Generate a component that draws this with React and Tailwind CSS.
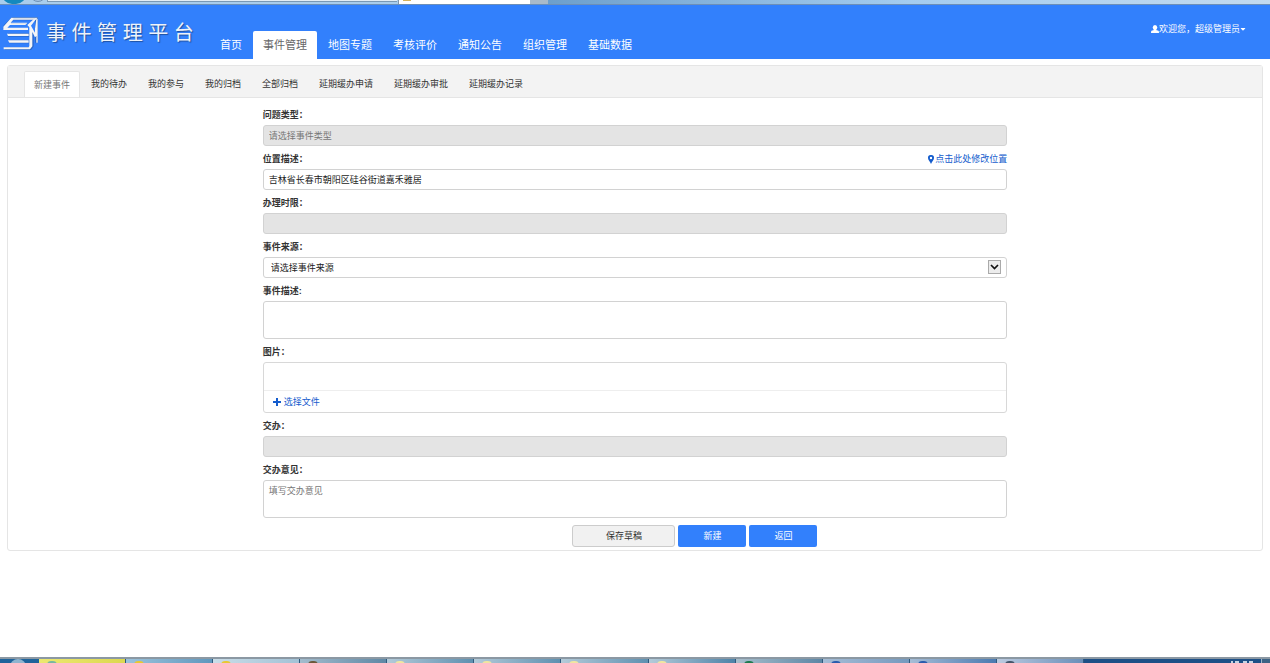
import React from "react";
import { FaCaretDown } from "react-icons/fa";

const navItems = ["首页", "事件管理", "地图专题", "考核评价", "通知公告", "组织管理", "基础数据"];

const tabs = [
  "新建事件",
  "我的待办",
  "我的参与",
  "我的归档",
  "全部归档",
  "延期缓办申请",
  "延期缓办审批",
  "延期缓办记录",
];

const inputClass =
  "block w-full h-[21px] px-[5px] border border-[#d2d2d2] rounded-[3px] bg-white text-[#222] placeholder:text-[#777] disabled:bg-[#e4e4e4] outline-none focus:border-[#3280fc]";

const areaClass =
  "block w-full h-[38px] px-[5px] py-1 border border-[#d2d2d2] rounded-[3px] resize-none placeholder:text-[#777] outline-none focus:border-[#3280fc]";

// 任务栏窗口
const tasks = [
  { bg: "bg-linear-to-r from-[#ece870] to-[#dcd850]", icon: "bg-[#78b8a0]" },
  { bg: "bg-linear-to-r from-[#9cc3dc] to-[#5f97bd]", icon: "bg-[#e8c832]" },
  { bg: "bg-linear-to-r from-[#c9dde8] to-[#a3c2d6]", icon: "bg-[#e8c832]" },
  { bg: "bg-linear-to-r from-[#a3bccd] to-[#5f88a5]", icon: "bg-[#6b5a3c]" },
  { bg: "bg-linear-to-r from-[#b4cbd9] to-[#5e90b0]", icon: "bg-[#f0e6a0]" },
  { bg: "bg-linear-to-r from-[#b4cbd9] to-[#5e90b0]", icon: "bg-[#f0e6a0]" },
  { bg: "bg-linear-to-r from-[#b4cbd9] to-[#5e90b0]", icon: "bg-[#f0e6a0]" },
  { bg: "bg-linear-to-r from-[#b4cbd9] to-[#4d83a8]", icon: "bg-[#f0e6a0]" },
  { bg: "bg-linear-to-r from-[#a9bfcc] to-[#5c86a5]", icon: "bg-[#1f7a50]" },
  { bg: "bg-linear-to-r from-[#a6bdd6] to-[#7599be]", icon: "bg-[#2a5cad]" },
  { bg: "bg-linear-to-r from-[#a6bdd6] to-[#4a7ab0]", icon: "bg-[#2a5cad]" },
  { bg: "bg-linear-to-r from-[#bccbe0] to-[#6a8fb9]", icon: "bg-[#44566b]" },
];

const Logo = () => (
  <svg viewBox="0 0 108 102" className="w-9 h-[34px] shrink-0" aria-hidden="true">
    <g fill="none" stroke="#1f4d96" strokeOpacity="0.5" strokeWidth="10" strokeLinejoin="round">
      <path d="M7 40 10 30 32 8H104V80M18 57H82M22 77H82M8 98H84L90 90V44" />
    </g>
    <g fill="#f3f5f8">
      <path d="M4 42V32L28 5H107L100 11H34L26 20H76L70 27H24L16 35H78V42Z" />
      <path d="M15 53H80V60H18Z" />
      <path d="M18 73H80V80H22Z" />
      <path d="M5 94H80L82 90V34L76 27 98 7H104L87 29 99 50V38L103 8H107V80H103V60L99 64 91 48V91L84 100H5Z" />
    </g>
    <path d="M27 23H74M34 8H100" stroke="#c3cede" strokeWidth="2" />
  </svg>
);

const UserIcon = () => (
  <svg viewBox="0 0 16 16" className="w-2 h-2 shrink-0" fill="currentColor" aria-hidden="true">
    <ellipse cx="8" cy="5" rx="4.500" ry="5" />
    <path d="M6 8H10V10L15 11.500Q16 12 16 16H0Q0 12 1 11.500L6 10Z" />
  </svg>
);

const MarkerIcon = () => (
  <svg viewBox="0 0 8 9" className="w-2 h-[9px]" aria-hidden="true">
    <path
      d="M4 0A2.900 2.900 0 0 0 1 3C1 5 3 6.500 4 9 5 6.500 7 5 7 3A2.900 2.900 0 0 0 4 0ZM4 1.800A1.200 1.200 0 1 1 4 4.200 1.200 1.200 0 0 1 4 1.800Z"
      fill="currentColor"
      fillRule="evenodd"
    />
  </svg>
);

// 浏览器窗口底边
const BrowserStrip = () => (
  <div className="flex h-[5px] overflow-hidden border-b border-[#6d8fb8] bg-[#a9cdec]" aria-hidden="true">
    <div className="w-6 h-5 -mt-4 ml-[2px] rounded-full bg-[#1489bd]" />
    <div className="w-4 h-[18px] -mt-4 ml-1 rounded-full border border-[#7092b5] bg-[#a3c3e2]" />
    <div className="w-[350px] h-[2px] ml-px border-l border-b border-[#7a99b5] bg-[#e3edf4]" />
    <div className="w-[132px] ml-px pl-1 border-l border-[#8397aa] bg-white">
      <div className="w-2 h-px bg-[#d8b35a]" />
    </div>
    <div className="w-[18px] bg-[#a9bac9]" />
    <div className="flex-1 bg-linear-to-r from-[#6d9fcb] via-[#a4ccef] to-[#c3daef]" />
  </div>
);

const Taskbar = () => (
  <div className="flex h-[6px] mt-auto overflow-hidden border-t-2 border-[#8b98a3] bg-[#1d4f86]" aria-hidden="true">
    <div className="w-[39px] bg-[#1f639b]">
      <div className="w-4 h-4 ml-[10px] rounded-full bg-[#8fb4cf]" />
    </div>
    <div className="flex w-[1045px]">
      {tasks.map((task, i) => (
        <div key={i} className={`flex-1 pt-[2px] pl-2 border-r border-[#2f597d] ${task.bg}`}>
          <div className={`w-[10px] h-1 rounded-t-sm ${task.icon}`} />
        </div>
      ))}
    </div>
    <div className="flex flex-1 items-end justify-end gap-[2px] pr-2">
      <span className="w-[2px] h-[2px] bg-[#c4d3e3]" />
      <span className="w-1 h-[2px] bg-[#c4d3e3]" />
      <span className="w-1 h-[2px] ml-[2px] bg-[#c4d3e3]" />
      <span className="w-1 h-[2px] bg-[#c4d3e3]" />
    </div>
    <div className="w-[9px] border-l border-[#9db5c8] bg-[#3d6285]" />
  </div>
);

const Header = () => (
  <header className="flex h-[54px] pl-[2px] pr-6 bg-[#3280fc] text-white">
    <div className="flex items-center w-[208px] pt-px">
      <Logo />
      <h1 className="ml-2 text-[20px] leading-6 whitespace-nowrap text-[#eef3fa] [text-shadow:1px_1px_1px_#1e4f9e]">
        事 件 管 理 平 台
      </h1>
    </div>
    <nav className="flex items-end text-[11px]">
      {navItems.map((item) => (
        <a
          key={item}
          href="#"
          className={`flex items-center h-7 px-[10px] mr-px rounded-t-[2px] ${
            item === "事件管理" ? "bg-white text-[#666]" : "text-white"
          }`}
        >
          {item}
        </a>
      ))}
    </nav>
    <button type="button" className="flex items-center h-4 mt-4 ml-auto">
      <UserIcon />
      欢迎您，超级管理员
      <FaCaretDown className="w-[6px] h-2" />
    </button>
  </header>
);

const Field = ({ id, label, extra, children }) => (
  <div className="mb-[3px]">
    <div className="flex items-center justify-between h-5">
      <label htmlFor={id} className="font-bold text-[#333]">
        {label}
      </label>
      {extra}
    </div>
    {children}
  </div>
);

const EventForm = () => (
  <form className="w-3/5 mx-auto px-1 pt-[7px] pb-[3px]" onSubmit={(e) => e.preventDefault()}>
    <Field id="type" label="问题类型：">
      <input id="type" className={inputClass} placeholder="请选择事件类型" disabled />
    </Field>
    <Field
      id="address"
      label="位置描述："
      extra={
        <a href="#" className="flex items-center text-[#145ccd]">
          <MarkerIcon />
          点击此处修改位置
        </a>
      }
    >
      <input id="address" className={inputClass} defaultValue="吉林省长春市朝阳区硅谷街道嘉禾雅居" />
    </Field>
    <Field id="limit" label="办理时限：">
      <input id="limit" className={inputClass} disabled />
    </Field>
    <Field id="source" label="事件来源：">
      <div className="relative">
        <select id="source" className={`${inputClass} appearance-none pl-[7px]`}>
          <option>请选择事件来源</option>
        </select>
        <span className="absolute right-[6px] top-[3px] flex items-center justify-center w-[13px] h-[14px] border border-[#aaa] bg-[#ececec] pointer-events-none">
          <svg viewBox="0 0 9 6" className="w-[9px] h-[6px]">
            <path d="M1 1 4.500 4.500 8 1" fill="none" stroke="#111" strokeWidth="1.700" />
          </svg>
        </span>
      </div>
    </Field>
    <Field id="desc" label="事件描述:">
      <textarea id="desc" className={areaClass} />
    </Field>
    <Field id="files" label="图片：">
      <div className="h-[51px] border border-[#d8d8d8] rounded-[3px]">
        <div className="h-7 border-b border-[#eee]" />
        <button id="files" type="button" className="flex items-center gap-[3px] h-[21px] ml-[9px] text-[#145ccd]">
          <svg viewBox="0 0 8 8" className="w-2 h-2" aria-hidden="true">
            <path d="M4 0V8M0 4H8" stroke="currentColor" strokeWidth="2" />
          </svg>
          选择文件
        </button>
      </div>
    </Field>
    <Field id="assign" label="交办：">
      <input id="assign" className={inputClass} disabled />
    </Field>
    <Field id="opinion" label="交办意见：">
      <textarea id="opinion" className={areaClass} placeholder="填写交办意见" />
    </Field>
    <div className="flex justify-center gap-[3px] pt-1 pl-[120px]">
      <button type="button" className="w-[103px] h-[22px] border border-[#ccc] rounded-[3px] bg-[#f1f1f1] text-[#333]">
        保存草稿
      </button>
      <button type="submit" className="w-[68px] h-[22px] rounded-[2px] bg-[#3280fc] text-white">
        新建
      </button>
      <button type="button" className="w-[68px] h-[22px] rounded-[2px] bg-[#3280fc] text-white">
        返回
      </button>
    </div>
  </form>
);

const App = () => {
  return (
    <div className="flex flex-col min-h-screen bg-white text-[9px] leading-3 font-['Liberation_Sans','Noto_Sans_CJK_SC',sans-serif]">
      <BrowserStrip />
      <Header />
      <main className="mx-[7px] mt-[6px] border border-[#e5e5e5] rounded-[3px]">
        <div className="flex items-end h-8 pl-4 border-b border-[#e5e5e5] bg-[#f3f3f3]">
          {tabs.map((tab) => (
            <a
              key={tab}
              href="#"
              className={`flex items-center h-[26px] mr-px rounded-t-[2px] ${
                tab === "新建事件" ? "px-[9px] border border-b-0 border-[#e5e5e5] bg-white text-[#777]" : "px-[10px] text-[#333]"
              }`}
            >
              {tab}
            </a>
          ))}
        </div>
        <EventForm />
      </main>
      <Taskbar />
    </div>
  );
};

export default App;
